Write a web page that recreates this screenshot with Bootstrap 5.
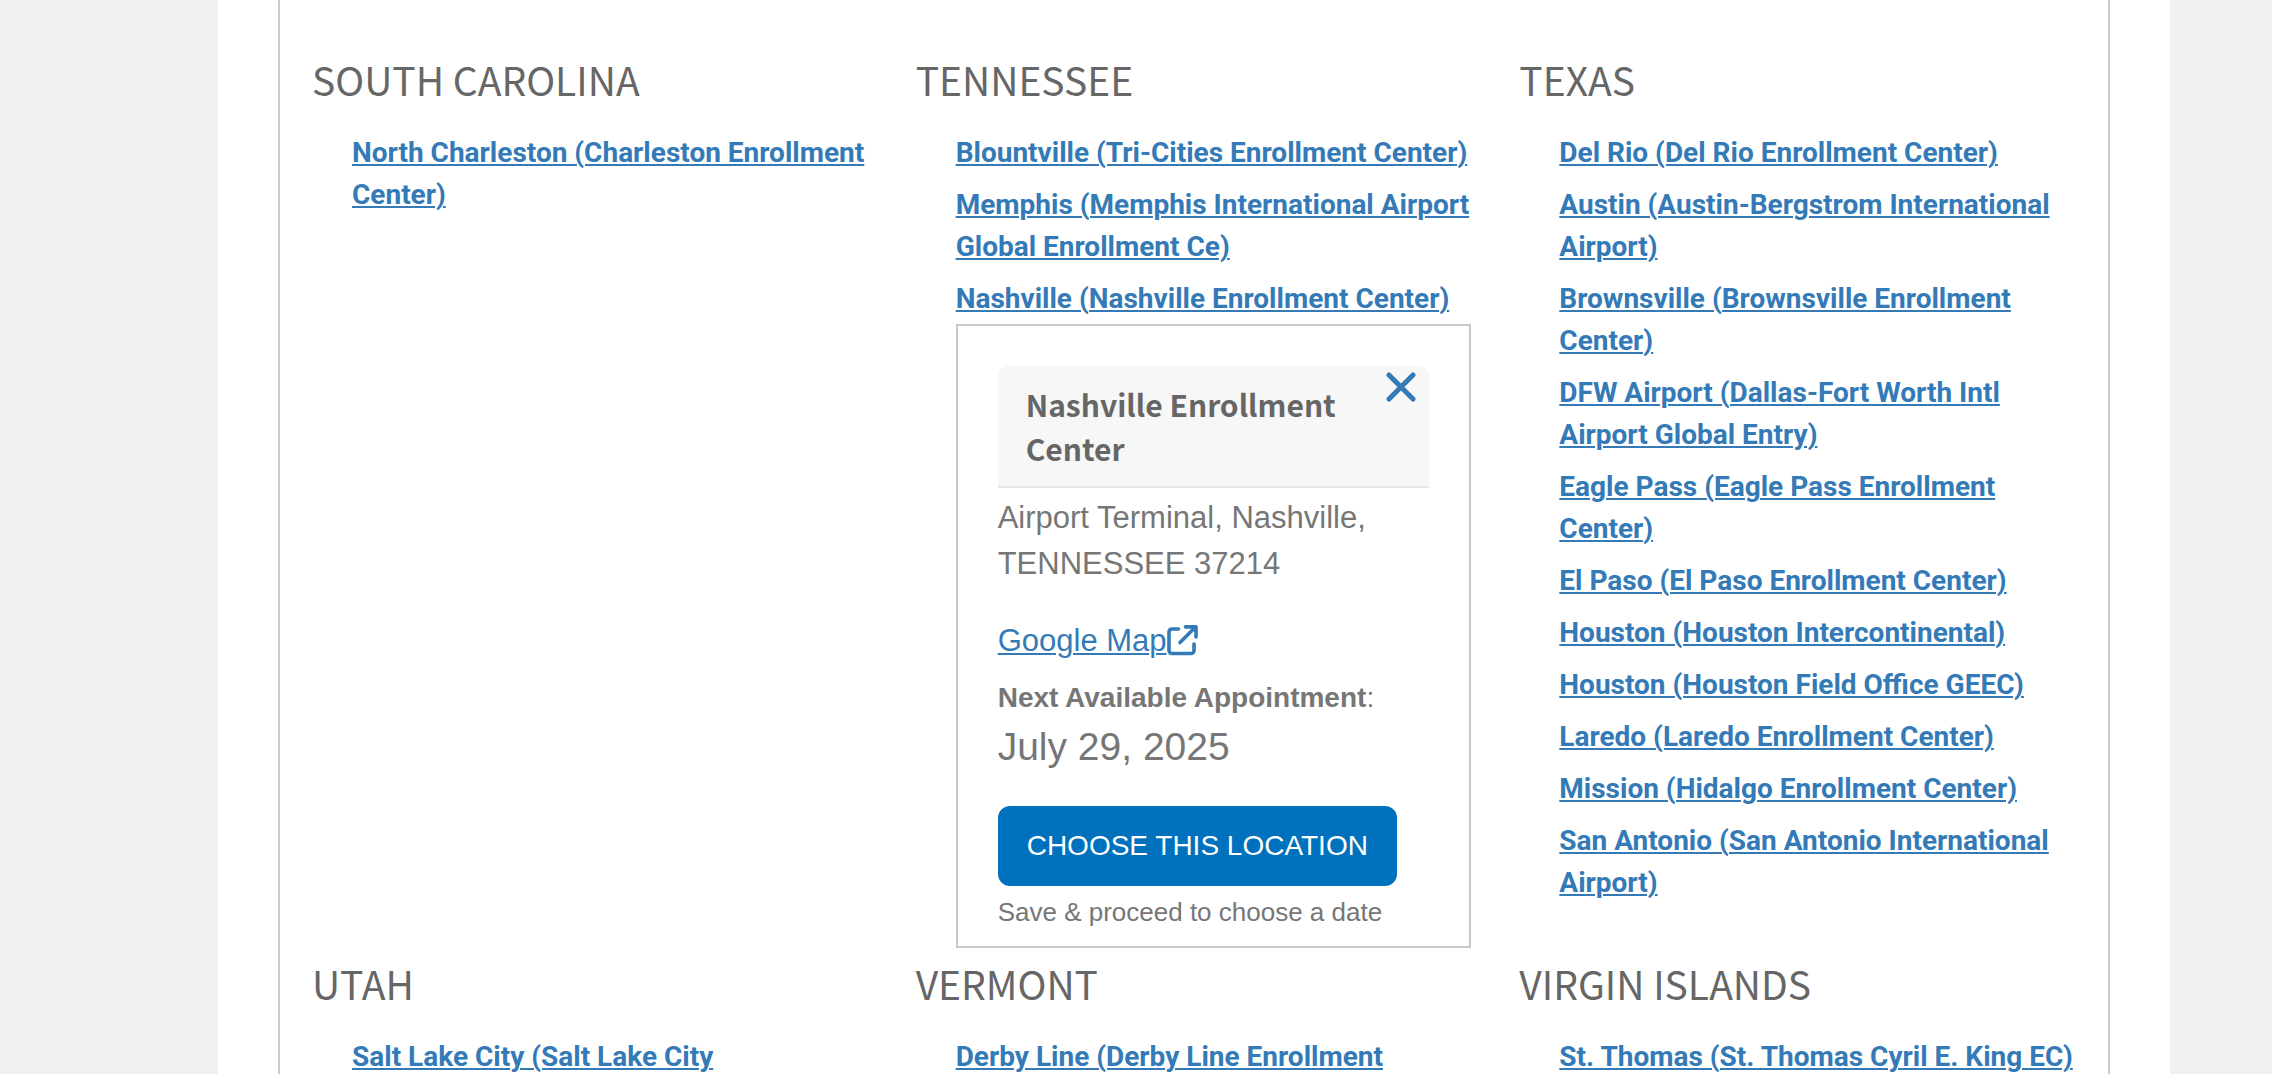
<!DOCTYPE html>
<html lang="en">
<head>
<meta charset="utf-8">
<meta name="viewport" content="width=device-width, initial-scale=1">
<title>Enrollment Centers</title>
<link href="https://cdn.jsdelivr.net/npm/bootstrap@5.3.0/dist/css/bootstrap.min.css" rel="stylesheet">
<style>
  body { background: #f1f1f1; color: #767676; font: 28px/42px "Liberation Sans", Arial, sans-serif; }
  a { color: #337ab7; text-decoration: underline; text-decoration-thickness: 2px; text-underline-offset: 2px; }
  .page-area { padding: 0 102px 0 218px; }
  .page-sheet { padding: 0 60px; }
  .centers { border: solid #ccc; border-width: 0 2px; padding: 49px 1px 0 16px; }
  .state { padding: 0 32px 5px 16px; }
  .state-name { margin: 0 0 23px; color: #666; font: 400 39px/60px "Noto Sans CJK SC", sans-serif; }
  .center-list { display: flex; flex-direction: column; gap: 10px; padding-left: 40px; }
  .center-list a { font-family: Roboto, sans-serif; font-weight: 700; }
  .detail { border: 2px solid #c8c8c8; border-radius: 0; padding: 40px 40px 14px; margin-top: -6px; color: inherit; }
  .detail-head { background: #f7f7f7; border-bottom: 2px solid #e8e8e8; border-radius: 10px 10px 0 0; padding: 16px 12px 16px 28px; min-height: 122px; }
  .detail-title { margin: 0; color: #666; font: 700 30px/44px "Noto Sans CJK SC", sans-serif; }
  .close-x { top: 6px; right: 13px; line-height: 0; color: #337ab7; }
  .detail-body { font-size: 31px; line-height: 46px; padding-top: 7px; }
  .detail-body .map-link { font-family: inherit; font-weight: 400; }
  .map-row { margin: 31px 0 13px; }
  .map-row svg { display: block; margin-top: 7px; }
  .next-label { font-size: 28px; line-height: 42px; }
  .next-date { font-size: 39px; line-height: 56px; margin-bottom: 31px; }
  .btn-choose { --bs-btn-bg: #0071bc; --bs-btn-border-color: #0071bc; --bs-btn-hover-bg: #205493; height: 80px; padding: 0 29px; border: 0; border-radius: 12px; font-size: 28px; line-height: 42px; }
  .save-note { font-size: 26px; line-height: 39px; margin-top: 7px; }
</style>
<script src="https://cdn.jsdelivr.net/npm/bootstrap@5.3.0/dist/js/bootstrap.bundle.min.js"></script>
</head>
<body>
<div class="page-area vh-100 overflow-hidden">
  <main class="page-sheet bg-white">
    <div class="centers">
      <div class="row g-0">
        <section class="state col-4">
          <h2 class="state-name">SOUTH CAROLINA</h2>
          <ul class="center-list list-unstyled m-0">
            <li><a href="#">North Charleston (Charleston Enrollment Center)</a></li>
          </ul>
        </section>
        <section class="state col-4">
          <h2 class="state-name">TENNESSEE</h2>
          <ul class="center-list list-unstyled m-0">
            <li><a href="#">Blountville (Tri-Cities Enrollment Center)</a></li>
            <li><a href="#">Memphis (Memphis International Airport Global Enrollment Ce)</a></li>
            <li><a href="#">Nashville (Nashville Enrollment Center)</a></li>
            <li class="card detail">
              <div class="detail-head position-relative">
                <h3 class="detail-title">Nashville Enrollment Center</h3>
                <button type="button" class="close-x btn border-0 p-0 position-absolute" aria-label="Close">
                  <svg width="30" height="30" viewBox="0 0 30 30" fill="none" stroke="currentColor" stroke-width="5" stroke-linecap="round" aria-hidden="true"><path d="M3 3 27 27M27 3 3 27"/></svg>
                </button>
              </div>
              <div class="detail-body">
                <div>Airport Terminal, Nashville, TENNESSEE 37214</div>
                <div class="map-row d-flex">
                  <a class="map-link" href="#">Google Map</a>
                  <svg width="31" height="31" viewBox="0 0 31 31" fill="none" stroke="#337ab7" stroke-linecap="round" stroke-linejoin="round" aria-hidden="true"><path stroke-width="3.6" d="M11.5 4H5a3 3 0 0 0-3 3V25.500a3 3 0 0 0 3 3H24a3 3 0 0 0 3-3V19M13 17.500 27.500 3M18.500 1.900H29V12"/><path fill="#337ab7" d="M24 2h5v5z"/></svg>
                </div>
                <div class="next-label"><strong>Next Available Appointment</strong>:</div>
                <div class="next-date">July 29, 2025</div>
                <button type="button" class="btn btn-primary btn-choose d-block">CHOOSE THIS LOCATION</button>
                <div class="save-note">Save &amp; proceed to choose a date</div>
              </div>
            </li>
          </ul>
        </section>
        <section class="state col-4">
          <h2 class="state-name">TEXAS</h2>
          <ul class="center-list list-unstyled m-0">
            <li><a href="#">Del Rio (Del Rio Enrollment Center)</a></li>
            <li><a href="#">Austin (Austin-Bergstrom International Airport)</a></li>
            <li><a href="#">Brownsville (Brownsville Enrollment Center)</a></li>
            <li><a href="#">DFW Airport (Dallas-Fort Worth Intl Airport Global Entry)</a></li>
            <li><a href="#">Eagle Pass (Eagle Pass Enrollment Center)</a></li>
            <li><a href="#">El Paso (El Paso Enrollment Center)</a></li>
            <li><a href="#">Houston (Houston Intercontinental)</a></li>
            <li><a href="#">Houston (Houston Field Office GEEC)</a></li>
            <li><a href="#">Laredo (Laredo Enrollment Center)</a></li>
            <li><a href="#">Mission (Hidalgo Enrollment Center)</a></li>
            <li><a href="#">San Antonio (San Antonio International Airport)</a></li>
          </ul>
        </section>
        <section class="state col-4">
          <h2 class="state-name">UTAH</h2>
          <ul class="center-list list-unstyled m-0">
            <li><a href="#">Salt Lake City (Salt Lake City</a></li>
          </ul>
        </section>
        <section class="state col-4">
          <h2 class="state-name">VERMONT</h2>
          <ul class="center-list list-unstyled m-0">
            <li><a href="#">Derby Line (Derby Line Enrollment</a></li>
          </ul>
        </section>
        <section class="state col-4">
          <h2 class="state-name">VIRGIN ISLANDS</h2>
          <ul class="center-list list-unstyled m-0">
            <li><a href="#">St. Thomas (St. Thomas Cyril E. King EC)</a></li>
          </ul>
        </section>
      </div>
    </div>
  </main>
</div>
</body>
</html>
